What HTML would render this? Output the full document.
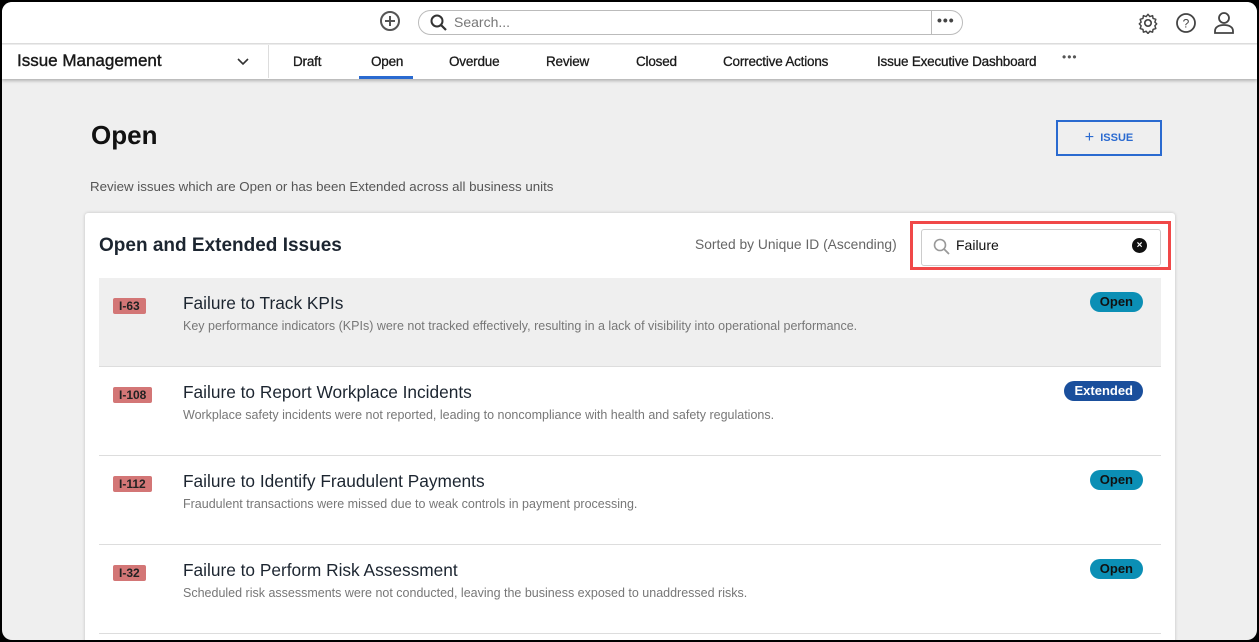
<!DOCTYPE html>
<html><head><meta charset="utf-8"><style>
*{box-sizing:border-box;margin:0;padding:0}
html,body{width:1259px;height:642px;overflow:hidden;background:#000;font-family:"Liberation Sans",sans-serif}
.frame{position:absolute;left:2px;top:2px;width:1255px;height:638px;background:#efefef;border-radius:10px;overflow:hidden}
.top{position:absolute;left:0;top:0;width:100%;height:42px;background:#fff;border-bottom:1px solid #ddd}
.nav{position:absolute;left:0;top:43px;width:100%;height:34px;background:#fff;box-shadow:0 2px 3px rgba(0,0,0,.25)}
.nav span{position:absolute;top:9px;font-size:13.5px;color:#1a1a1a;letter-spacing:-.2px;-webkit-text-stroke:.3px #1a1a1a}
.abs{position:absolute}
.card{position:absolute;left:83px;top:211px;width:1090px;height:440px;background:#fff;border-radius:3px;box-shadow:0 0 3px rgba(0,0,0,.2)}
.row{position:absolute;left:14px;width:1062px;height:89px;border-bottom:1px solid #ddd}
.id{position:absolute;left:14px;top:20px;height:16px;padding:0 6px;background:#d37676;border-radius:2px;font-size:12px;font-weight:bold;line-height:16px;color:#222}
.tt{position:absolute;left:84px;top:15px;font-size:17.3px;color:#1c2530}
.ds{position:absolute;left:84px;top:41px;font-size:12.5px;color:#777}
.bd{position:absolute;right:18px;top:14px;height:20px;border-radius:10px;padding:0 10px;font-size:13px;font-weight:bold;line-height:20px;color:#111;background:#0b8fb5}
</style></head><body><div class="frame">
<div class="top">
 <svg class="abs" style="left:377px;top:8px" width="22" height="22" viewBox="0 0 22 22"><circle cx="11" cy="11" r="9" fill="none" stroke="#555" stroke-width="2"/><path d="M11 6v10M6 11h10" stroke="#555" stroke-width="2"/></svg>
 <div class="abs" style="left:416px;top:8px;width:545px;height:25px;border:1px solid #bbb;border-radius:13px"></div>
 <div class="abs" style="left:929px;top:9px;width:1px;height:23px;background:#bbb"></div>
 <div class="abs" style="left:935px;top:10px;font-size:14px;color:#444;letter-spacing:1px;font-weight:bold">•••</div>
 <svg class="abs" style="left:428px;top:12px" width="18" height="18" viewBox="0 0 18 18"><circle cx="7" cy="7" r="5.5" fill="none" stroke="#333" stroke-width="2"/><path d="M11 11l5 5" stroke="#333" stroke-width="2.2"/></svg>
 <div class="abs" style="left:452px;top:12px;font-size:14px;color:#777">Search...</div>
 <svg class="abs" style="left:1135px;top:10px" width="22" height="22" viewBox="0 0 24 24"><circle cx="12" cy="12" r="3.5" fill="none" stroke="#444" stroke-width="1.8"/><path d="M12 2.5l2 2.5 3-1 .5 3 3 1-1 3 2 2-2 2 1 3-3 1-.5 3-3-1-2 2.5-2-2.5-3 1-.5-3-3-1 1-3-2-2 2-2-1-3 3-1 .5-3 3 1z" fill="none" stroke="#444" stroke-width="1.6" stroke-linejoin="round"/></svg>
 <svg class="abs" style="left:1173px;top:10px" width="22" height="22" viewBox="0 0 22 22"><circle cx="11" cy="11" r="9" fill="none" stroke="#444" stroke-width="1.8"/><text x="11" y="15.5" text-anchor="middle" font-size="12" font-family="Liberation Sans" fill="#444">?</text></svg>
 <svg class="abs" style="left:1211px;top:9px" width="22" height="24" viewBox="0 0 22 24"><circle cx="11" cy="7" r="5" fill="none" stroke="#444" stroke-width="1.8"/><path d="M2 22v-2c0-4 4-6 9-6s9 2 9 6v2z" fill="none" stroke="#444" stroke-width="1.8"/></svg>
</div>
<div class="nav">
 <div class="abs" style="left:15px;top:6px;font-size:17px;color:#1a1a1a;-webkit-text-stroke:.4px #1a1a1a">Issue Management</div>
 <svg class="abs" style="left:234px;top:12px" width="14" height="10" viewBox="0 0 14 10"><path d="M2 2l5 5 5-5" fill="none" stroke="#333" stroke-width="1.6"/></svg>
 <div class="abs" style="left:266px;top:0;width:1px;height:33px;background:#ddd"></div>
 <span style="left:291px">Draft</span><span style="left:369px">Open</span><span style="left:447px">Overdue</span><span style="left:544px">Review</span><span style="left:634px">Closed</span><span style="left:721px">Corrective Actions</span><span style="left:875px">Issue Executive Dashboard</span><span style="left:1060px;top:5px;font-size:12px;letter-spacing:1px;color:#555;-webkit-text-stroke:0">•••</span>
 <div class="abs" style="left:357px;top:31px;width:54px;height:3px;background:#2a6ad0"></div>
</div>
<div class="abs" style="left:89px;top:118px;font-size:26px;font-weight:bold;color:#111">Open</div>
<div class="abs" style="left:88px;top:177px;font-size:13.3px;color:#555">Review issues which are Open or has been Extended across all business units</div>
<div class="abs" style="left:1054px;top:118px;width:106px;height:36px;border:2px solid #2a6ad0;color:#2a6ad0;font-size:11px;font-weight:bold;text-align:center;line-height:32px"><span style="font-size:16px;font-weight:normal;vertical-align:-1px">+</span>&nbsp; ISSUE</div>
<div class="card">
 <div class="abs" style="left:14px;top:22px;font-size:19px;font-weight:bold;color:#1c2530">Open and Extended Issues</div>
 <div class="abs" style="left:610px;top:24px;font-size:13.8px;color:#666">Sorted by Unique ID (Ascending)</div>
 <div class="abs" style="left:825px;top:8px;width:261px;height:49px;border:3px solid #f04848"></div>
 <div class="abs" style="left:836px;top:16px;width:240px;height:37px;border:1px solid #ccc;border-radius:3px"></div>
 <svg class="abs" style="left:848px;top:25px" width="18" height="18" viewBox="0 0 18 18"><circle cx="7" cy="7" r="5.5" fill="none" stroke="#999" stroke-width="1.6"/><path d="M11 11l5 5" stroke="#999" stroke-width="1.8"/></svg>
 <div class="abs" style="left:871px;top:24px;font-size:14px;color:#111">Failure</div>
 <div class="abs" style="left:1047px;top:25px;width:15px;height:15px;border-radius:50%;background:#111;color:#fff;font-size:10px;text-align:center;line-height:15px;font-weight:bold">×</div>
 <div class="row" style="top:65px;background:#efefef"><div class="id">I-63</div><div class="tt">Failure to Track KPIs</div><div class="ds">Key performance indicators (KPIs) were not tracked effectively, resulting in a lack of visibility into operational performance.</div><div class="bd">Open</div></div>
 <div class="row" style="top:154px"><div class="id">I-108</div><div class="tt">Failure to Report Workplace Incidents</div><div class="ds">Workplace safety incidents were not reported, leading to noncompliance with health and safety regulations.</div><div class="bd" style="background:#1a4f9c;color:#fff">Extended</div></div>
 <div class="row" style="top:243px"><div class="id">I-112</div><div class="tt">Failure to Identify Fraudulent Payments</div><div class="ds">Fraudulent transactions were missed due to weak controls in payment processing.</div><div class="bd">Open</div></div>
 <div class="row" style="top:332px"><div class="id">I-32</div><div class="tt">Failure to Perform Risk Assessment</div><div class="ds">Scheduled risk assessments were not conducted, leaving the business exposed to unaddressed risks.</div><div class="bd">Open</div></div>
</div>
</div></body></html>
